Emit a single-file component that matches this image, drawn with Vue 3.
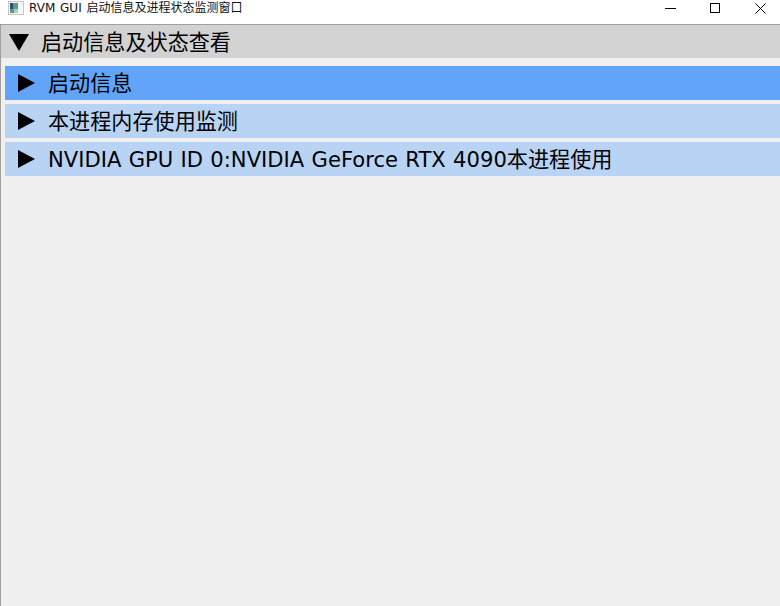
<script setup>
const rows = [
  { label: '启动信息', active: true },
  { label: '本进程内存使用监测', active: false },
  { label: 'NVIDIA GPU ID 0:NVIDIA GeForce RTX 4090本进程使用', active: false },
]
</script>

<template>
  <div class="window">
    <div class="titlebar">
      <svg class="app-icon" width="16" height="16" viewBox="0 0 16 16">
        <rect x="0.5" y="1.5" width="15" height="13" fill="#f4f6f6" stroke="#c4c8ca" />
        <rect x="2" y="3" width="8" height="10" fill="#5a9a90" />
        <rect x="2" y="3" width="3" height="6" fill="#2d4f66" />
        <rect x="6" y="9" width="4" height="4" fill="#a8d4b0" />
      </svg>
      <span class="title">RVM GUI 启动信息及进程状态监测窗口</span>
      <div class="controls">
        <svg width="11" height="11" viewBox="0 0 11 11">
          <path d="M0 5.5H11" stroke="#000" fill="none" />
        </svg>
        <svg width="11" height="11" viewBox="0 0 11 11">
          <rect x="0.5" y="0.5" width="9" height="9" stroke="#000" fill="none" />
        </svg>
        <svg width="11" height="11" viewBox="0 0 11 11">
          <path d="M0.5 0.5L10.5 10.5M10.5 0.5L0.5 10.5" stroke="#000" fill="none" />
        </svg>
      </div>
    </div>
    <div class="client">
      <div class="header">
        <svg class="arrow-down" width="20" height="17" viewBox="0 0 20 17">
          <path d="M0 0H20L10 17Z" fill="#000" />
        </svg>
        <span class="label">启动信息及状态查看</span>
      </div>
      <div class="list">
        <div v-for="row in rows" :key="row.label" class="row" :class="{ active: row.active }">
          <svg class="arrow-right" width="17" height="18" viewBox="0 0 17 18">
            <path d="M0 0L17 9L0 18Z" fill="#000" />
          </svg>
          <span class="label">{{ row.label }}</span>
        </div>
      </div>
    </div>
  </div>
</template>

<style>
html, body {
  margin: 0;
  padding: 0;
  background: #f0f0f0;
}
</style>

<style scoped>
.window {
  width: 780px;
  height: 606px;
  display: flex;
  flex-direction: column;
  overflow: hidden;
  font-family: "DejaVu Sans", "Noto Sans CJK SC", sans-serif;
  color: #000;
}

.titlebar {
  height: 24px;
  flex: none;
  display: flex;
  align-items: flex-start;
  background: #fff;
  padding-left: 8px;
  box-sizing: border-box;
}

.app-icon {
  flex: none;
}

.title {
  margin-left: 5px;
  font-size: 12px;
  line-height: 17px;
  word-spacing: 1px;
  white-space: nowrap;
  color: #111;
}

.controls {
  margin-left: auto;
  padding: 3px 14px 0 0;
  display: flex;
  gap: 34px;
}

.client {
  flex: 1;
  border-left: 1px solid #a0a0a0;
  border-top: 1px solid #a0a0a0;
  background: #f0f0f0;
  min-height: 0;
}

.header {
  height: 33px;
  background: #d2d2d2;
  display: flex;
  align-items: center;
  padding-left: 8px;
  font-size: 21.12px;
  gap: 12px;
}

.arrow-down {
  margin-top: 1px;
}

.label {
  margin-top: -2px;
}

.list {
  margin-top: 8px;
  padding-left: 4px;
  display: flex;
  flex-direction: column;
  gap: 4px;
}

.row {
  height: 34px;
  background: #b8d3f3;
  display: flex;
  align-items: center;
  padding-left: 13px;
  gap: 13px;
  font-size: 21.12px;
  word-spacing: 0.6px;
  white-space: nowrap;
}

.row.active {
  background: #62a5f8;
}
</style>
